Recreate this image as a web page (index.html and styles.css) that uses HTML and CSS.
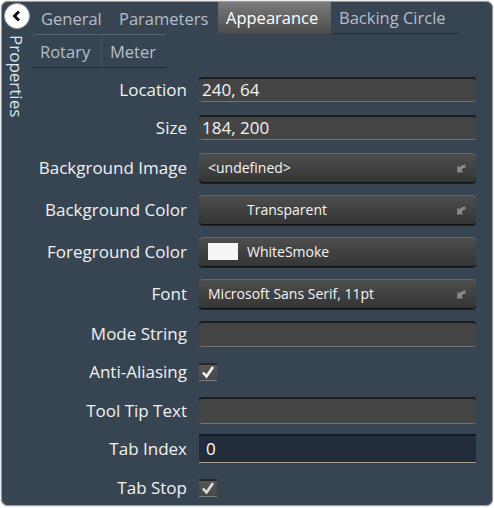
FILE: index.html
```html
<!DOCTYPE html>
<html lang="en">
<head>
<meta charset="utf-8">
<title>Properties</title>
<link rel="stylesheet" href="styles.css">
</head>
<body>
<div class="panel">
  <aside class="side">
    <button class="back" type="button" aria-label="Collapse">
      <svg width="26" height="26" viewBox="0 0 26 26">
        <circle cx="13" cy="13" r="12.5" fill="#ffffff" stroke="#a8a8a8" stroke-width="1"/>
        <path d="M15 8.5 L10.5 13 L15 17.5" fill="none" stroke="#111" stroke-width="3"/>
      </svg>
    </button>
    <div class="side-title">Properties</div>
  </aside>
  <main class="content">
    <nav class="tabs">
      <div class="tab-row">
        <span class="tab t-general">General</span>
        <span class="tab t-params">Parameters</span>
        <span class="tab t-appear active">Appearance</span>
        <span class="tab t-backing">Backing Circle</span>
      </div>
      <div class="tab-row second">
        <span class="tab t-rotary">Rotary</span>
        <span class="tab t-meter">Meter</span>
      </div>
    </nav>
    <div class="props">
      <div class="row"><span class="label">Location</span><div class="field">240, 64</div></div>
      <div class="row"><span class="label">Size</span><div class="field">184, 200</div></div>
      <div class="row"><span class="label">Background Image</span>
        <div class="drop"><span class="drop-text">&lt;undefined&gt;</span>
          <svg class="arrow" width="10" height="9" viewBox="0 0 10 9"><path d="M9.5 0.5 C7 0.5 5 1.3 3.8 3.2 L1.5 1.5 L1 8.5 L7.5 8.3 L5.4 6.2 C6.4 4.4 7.8 3.8 9.5 3.8 Z" fill="#8a8a8a"/></svg>
        </div></div>
      <div class="row"><span class="label">Background Color</span>
        <div class="drop"><span class="swatch clear"></span><span class="drop-text">Transparent</span>
          <svg class="arrow" width="10" height="9" viewBox="0 0 10 9"><path d="M9.5 0.5 C7 0.5 5 1.3 3.8 3.2 L1.5 1.5 L1 8.5 L7.5 8.3 L5.4 6.2 C6.4 4.4 7.8 3.8 9.5 3.8 Z" fill="#8a8a8a"/></svg>
        </div></div>
      <div class="row"><span class="label">Foreground Color</span>
        <div class="drop"><span class="swatch white"></span><span class="drop-text">WhiteSmoke</span></div></div>
      <div class="row"><span class="label">Font</span>
        <div class="drop"><span class="drop-text">Microsoft Sans Serif, 11pt</span>
          <svg class="arrow" width="10" height="9" viewBox="0 0 10 9"><path d="M9.5 0.5 C7 0.5 5 1.3 3.8 3.2 L1.5 1.5 L1 8.5 L7.5 8.3 L5.4 6.2 C6.4 4.4 7.8 3.8 9.5 3.8 Z" fill="#8a8a8a"/></svg>
        </div></div>
      <div class="row"><span class="label">Mode String</span><div class="field mid"></div></div>
      <div class="row check-row"><span class="label">Anti-Aliasing</span>
        <span class="check"><svg width="18" height="18" viewBox="0 0 18 18"><path d="M4 9.5 L7.5 13.5 L14 4" fill="none" stroke="#f2f2f2" stroke-width="2.6"/></svg></span></div>
      <div class="row"><span class="label">Tool Tip Text</span><div class="field tall"></div></div>
      <div class="row tight"><span class="label">Tab Index</span><div class="field dark">0</div></div>
      <div class="row check-row"><span class="label">Tab Stop</span>
        <span class="check"><svg width="18" height="18" viewBox="0 0 18 18"><path d="M4 9.5 L7.5 13.5 L14 4" fill="none" stroke="#dcdcdc" stroke-width="2.6"/></svg></span></div>
    </div>
  </main>
</div>
</body>
</html>
```
FILE: styles.css
```css
* { box-sizing: border-box; }
html, body { margin: 0; padding: 0; background: #ffffff; }
body { font-family: "Open Sans", "Noto Sans", sans-serif; }

.panel {
  margin: 1px;
  width: 492px;
  height: 505px;
  border: 1px solid #9c9c9c;
  border-radius: 7px;
  background: #374553;
  box-shadow: 0 0 1px #555;
  display: flex;
  overflow: hidden;
}

.side {
  width: 30px;
  flex: none;
  display: flex;
  flex-direction: column;
  align-items: center;
}
.back {
  margin: 1px 0 0 0;
  padding: 0;
  border: 0;
  background: none;
  width: 26px;
  height: 26px;
  display: block;
  cursor: pointer;
}
.back svg { display: block; }
.side-title {
  writing-mode: vertical-rl;
  margin-top: 6px;
  color: #dbe6f1;
  font-size: 17px;
  line-height: 16px;
  margin-left: -2px;
}

.content { flex: 1; display: flex; flex-direction: column; }

.tabs { display: flex; flex-direction: column; }
.tab-row { display: flex; height: 32px; }
.tab-row.second { height: 34px; }
.tab {
  display: flex;
  align-items: center;
  padding-left: 8px;
  font-size: 16.5px;
  color: #b5bec8;
  white-space: nowrap;
  border-bottom: 1px solid #2a343f;
}
.tab.active {
  color: #ffffff;
  background: linear-gradient(#7c7c7c, #4d4d4d);
  border-bottom-color: #4a4a4a;
  margin-top: -1px;
}
.t-general { width: 78px; margin-left: 1px; }
.t-params { width: 107px; }
.t-appear { width: 113px; }
.t-backing { width: 128px; }
.tab-row.second .tab {
  border-top: 1px solid #5a6672;
  border-bottom: 1px solid #1f2833;
  border-top-left-radius: 4px;
  padding-top: 0;
}
.tab-row.second .tab + .tab { border-top-left-radius: 0; border-left: 1px solid #45515d; }
.t-rotary { width: 69px; }
.t-meter { width: 65px; }
.tab-row:first-child .tab:not(.active) { border-bottom: none; }
.t-backing { border-bottom: 1px solid #26303b !important; margin-right: auto; }

.props {
  padding-top: 9px;
  display: flex;
  flex-direction: column;
  gap: 13px;
}
.row {
  display: grid;
  grid-template-columns: 155px 277px;
  column-gap: 12px;
  align-items: center;
}
.row.check-row { height: 24px; }
.row.tight { margin-top: -3px; }
.label {
  text-align: right;
  color: #f1f1f1;
  font-size: 17px;
  line-height: 20px;
  white-space: nowrap;
}

.field {
  height: 25px;
  background: #444444;
  border-radius: 3px;
  box-shadow: inset 0 2px 0 #1c1c1c;
  border-bottom: 1px solid #747474;
  color: #f2f2f2;
  font-size: 17px;
  line-height: 24px;
  padding: 1px 0 0 3px;
}
.field.mid { height: 26px; }
.field.tall { height: 27px; }
.field.dark {
  height: 29px;
  background: #222d39;
  border-radius: 0;
  box-shadow: inset 0 2px 0 #131a22;
  border-bottom: 1px solid #a59f8b;
  padding: 2px 0 0 7px;
  line-height: 25px;
  color: #ffffff;
}

.drop {
  height: 29px;
  border-radius: 4px;
  background: linear-gradient(#4e4e4e, #353535);
  box-shadow: inset 0 1px 0 #666666, 0 1px 0 #121212, 0 2px 0 #1b232c;
  display: flex;
  align-items: center;
  padding: 0 10px 0 9px;
  color: #f4f4f4;
  font-size: 14px;
}
.drop-text { flex: 1; white-space: nowrap; }
.swatch { width: 30px; height: 17px; margin-right: 9px; flex: none; }
.swatch.white { background: #f5f5f5; }
.swatch.clear { background: transparent; }
.arrow { flex: none; margin-top: 2px; }

.check {
  width: 18px;
  height: 18px;
  background: linear-gradient(#5a5a5a, #474747);
  box-shadow: inset 0 2px 0 #262626;
  border-bottom: 1px solid #7c7c7c;
  display: block;
}
.check svg { display: block; }
```
